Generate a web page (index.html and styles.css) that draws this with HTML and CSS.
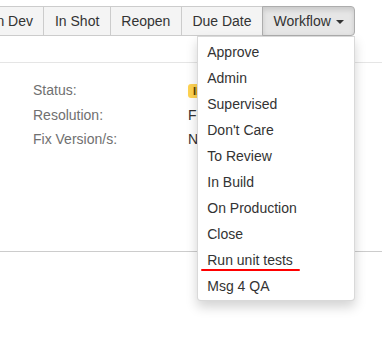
FILE: index.html
```html
<!DOCTYPE html>
<html lang="en">
<head>
    <meta charset="UTF-8">
    <title>Issue Workflow</title>
    <link rel="stylesheet" href="styles.css">
</head>
<body>

    <!-- Issue toolbar -->
    <div class="page-header">
        <div class="toolbar">
            <button class="btn">In Dev</button>
            <button class="btn">In Shot</button>
            <button class="btn">Reopen</button>
            <button class="btn">Due Date</button>
            <div class="btn-group">
                <button class="btn btn-active">Workflow <span class="caret"></span></button>
                <ul class="dropdown-menu">
                    <li>Approve</li>
                    <li>Admin</li>
                    <li>Supervised</li>
                    <li>Don't Care</li>
                    <li>To Review</li>
                    <li>In Build</li>
                    <li>On Production</li>
                    <li>Close</li>
                    <li class="marked">Run unit tests</li>
                    <li>Msg 4 QA</li>
                </ul>
            </div>
        </div>
    </div>

    <!-- Issue details -->
    <div class="details-module">
        <div class="details">
            <div class="label">Status:</div>
            <div class="value"><span class="lozenge">In Build</span></div>
            <div class="label">Resolution:</div>
            <div class="value">Fixed</div>
            <div class="label">Fix Version/s:</div>
            <div class="value">None</div>
        </div>
    </div>

</body>
</html>
```

FILE: styles.css
```css
/* General Styles */
html, body {
    overflow-x: hidden;
}

body {
    font-family: "Liberation Sans", Arial, sans-serif;
    font-size: 14px;
    color: #333;
    background-color: #fff;
    margin: 0;
    min-height: 342px;
}

/* Header with toolbar */
.page-header {
    padding-top: 6px;
    padding-bottom: 26px;
    border-bottom: 1px solid #e5e5e5;
}

.toolbar {
    display: flex;
    margin-left: -18px;
}

.btn {
    font-family: inherit;
    font-size: 14px;
    line-height: 20px;
    color: #333;
    background-color: #f4f4f4;
    border: 1px solid #ccc;
    margin-left: -1px;
    padding: 4px 10.5px;
    border-radius: 0;
    cursor: pointer;
}

.btn-group {
    position: relative;
    display: flex;
}

.btn-active {
    background-color: #e6e6e6;
    border-color: #adadad;
    border-radius: 0 4px 4px 0;
    box-shadow: inset 0 3px 5px rgba(0, 0, 0, 0.125);
}

.caret {
    display: inline-block;
    width: 0;
    height: 0;
    margin-left: 1px;
    vertical-align: middle;
    border-top: 4px solid #333;
    border-left: 4px solid transparent;
    border-right: 4px solid transparent;
}

/* Dropdown */
.dropdown-menu {
    position: absolute;
    top: 100%;
    right: 0;
    z-index: 10;
    width: 158px;
    box-sizing: border-box;
    margin: 0;
    padding: 2px 0 1px;
    list-style: none;
    background-color: #fff;
    border: 1px solid rgba(0, 0, 0, 0.15);
    border-radius: 0 0 4px 4px;
    box-shadow: 0 6px 12px rgba(0, 0, 0, 0.175);
}

.dropdown-menu li {
    position: relative;
    padding: 3px 9px;
    line-height: 20px;
    white-space: nowrap;
}

.dropdown-menu li.marked::after {
    content: "";
    position: absolute;
    left: 3px;
    bottom: 2px;
    width: 99px;
    height: 2px;
    border-radius: 1px;
    background-color: #f00;
}

/* Details */
.details-module {
    padding: 15px 0 0 33px;
    height: 173px;
    border-bottom: 1px solid #ccc;
}

.details {
    display: grid;
    grid-template-columns: 155px auto;
    line-height: 24.5px;
}

.label {
    color: #707070;
}

.lozenge {
    display: inline-block;
    padding: 0 5px;
    line-height: 14px;
    font-size: 11px;
    font-weight: bold;
    text-transform: uppercase;
    color: #594300;
    background-color: #ffd351;
    border-radius: 3px;
    vertical-align: middle;
}
```
